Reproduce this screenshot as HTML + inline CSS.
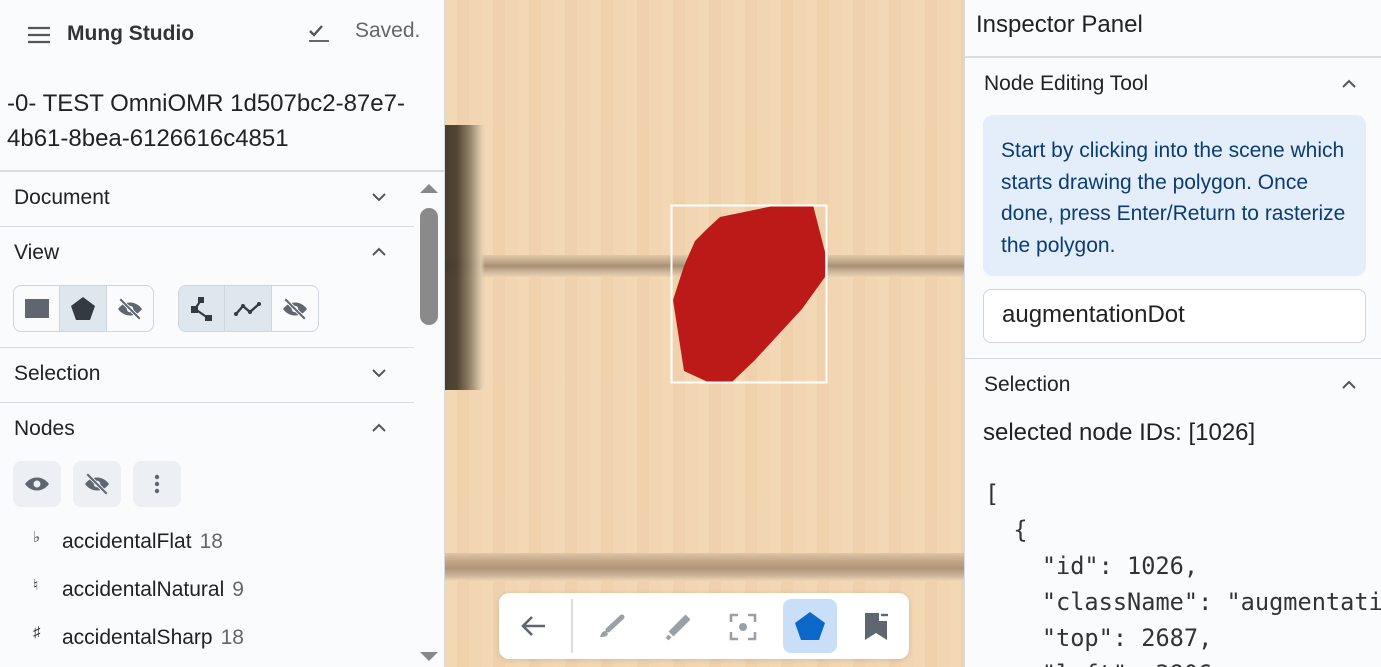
<!DOCTYPE html>
<html><head><meta charset="utf-8">
<style>
*{box-sizing:border-box;margin:0;padding:0}
html,body{width:1381px;height:667px;overflow:hidden}
body{position:relative;font-family:"Liberation Sans",sans-serif;color:#222;background:#fafbfd}
.abs{position:absolute}
#left{left:0;top:0;width:445px;height:667px;background:#fafbfd;border-right:1px solid #d8dadd;overflow:hidden}
#canvas{left:445px;top:0;width:519px;height:667px;overflow:hidden;background:#f1d4b0}
#right{left:964px;top:0;width:417px;height:667px;background:#fafbfd;border-left:1px solid #d8dadd;overflow:hidden}
.row{position:absolute;left:0;width:414px;height:55px;font-size:21px;color:#222}
.row span{position:absolute;left:14px;top:15px}
.row svg{position:absolute;left:370px;top:20px}
.hr{position:absolute;left:0;height:1px;background:#d8dadd}
.grp{position:absolute;top:285px;height:47px;border:1px solid #cfd5dc;border-radius:8px;display:flex;overflow:hidden}
.grp div{width:47px;height:45px;display:flex;align-items:center;justify-content:center;border-right:1px solid #cfd5dc}
.grp div:last-child{border-right:none}
.sel{background:#dfe7ee}
.nb{position:absolute;top:461px;width:48px;height:46px;background:#eceff3;border-radius:8px;display:flex;align-items:center;justify-content:center}
.item{position:absolute;left:62px;font-size:21px;color:#222}
.item b{font-weight:normal;color:#666;margin-left:8px}
.acc{position:absolute;left:33px;font-size:15px;color:#333}
.mono{font-family:"DejaVu Sans Mono","Liberation Mono",monospace;font-size:23.6px;color:#333;white-space:pre;line-height:36px}
</style></head><body>

<div id="left" class="abs">
  <svg class="abs" style="left:27px;top:26px" width="24" height="18" viewBox="0 0 24 18"><path d="M1 2h22M1 9h22M1 16h22" stroke="#555" stroke-width="2.2"/></svg>
  <div class="abs" style="left:67px;top:22px;font-size:21px;font-weight:bold;color:#333">Mung Studio</div>
  <svg class="abs" style="left:307px;top:20px" width="24" height="24" viewBox="0 0 24 24"><path d="M3 11l4 4 8-9" stroke="#555" stroke-width="2.4" fill="none"/><path d="M2 21h20" stroke="#666" stroke-width="2"/></svg>
  <div class="abs" style="left:355px;top:19px;font-size:21px;color:#666">Saved.</div>
  <div class="abs" style="left:7px;top:86px;font-size:24px;line-height:35px;color:#222;width:435px">-0- TEST OmniOMR 1d507bc2-87e7-<br>4b61-8bea-6126616c4851</div>
  <div class="hr" style="top:170px;width:444px;height:2px;background:#dcdcdc"></div>

  <div class="row" style="top:171px"><span>Document</span><svg width="18" height="12" viewBox="0 0 18 12"><path d="M3 3l6 6 6-6" stroke="#555" stroke-width="2" fill="none"/></svg></div>
  <div class="hr" style="top:226px;width:414px"></div>
  <div class="row" style="top:226px"><span>View</span><svg width="18" height="12" viewBox="0 0 18 12"><path d="M3 9l6-6 6 6" stroke="#555" stroke-width="2" fill="none"/></svg></div>
  <div class="grp" style="left:13px;width:141px">
    <div><svg width="26" height="22"><rect x="1" y="1" width="24" height="19" fill="#5f6670"/></svg></div>
    <div class="sel"><svg width="26" height="26" viewBox="0 0 26 26"><path d="M13 1L25 10 20 24H6L1 10Z" fill="#333a42"/></svg></div>
    <div><svg width="30" height="26" viewBox="0 0 24 24"><path d="M12 6C7 6 3 9 1 12c2 3 6 6 11 6s9-3 11-6c-2-3-6-6-11-6z" fill="#5f6670"/><circle cx="12" cy="12" r="3" fill="#fafbfd"/><path d="M3 3l18 18" stroke="#fafbfd" stroke-width="3.5"/><path d="M3 3l18 18" stroke="#5f6670" stroke-width="1.8"/></svg></div>
  </div>
  <div class="grp" style="left:178px;width:141px">
    <div class="sel"><svg width="24" height="26" viewBox="0 0 24 26"><rect x="1" y="10" width="7" height="7" fill="#333a42"/><rect x="8" y="1" width="6" height="6" fill="#333a42"/><rect x="15" y="19" width="7" height="6" fill="#333a42"/><path d="M5 13L11 4M5 13L18 22" stroke="#333a42" stroke-width="2.2"/></svg></div>
    <div class="sel"><svg width="28" height="18" viewBox="0 0 28 18"><path d="M2 14L9 6l7 6 9-8" stroke="#333a42" stroke-width="2.4" fill="none"/><circle cx="2" cy="14" r="2" fill="#333a42"/><circle cx="9" cy="6" r="2" fill="#333a42"/><circle cx="16" cy="12" r="2" fill="#333a42"/><circle cx="25" cy="4" r="2" fill="#333a42"/></svg></div>
    <div><svg width="30" height="26" viewBox="0 0 24 24"><path d="M12 6C7 6 3 9 1 12c2 3 6 6 11 6s9-3 11-6c-2-3-6-6-11-6z" fill="#5f6670"/><circle cx="12" cy="12" r="3" fill="#fafbfd"/><path d="M3 3l18 18" stroke="#fafbfd" stroke-width="3.5"/><path d="M3 3l18 18" stroke="#5f6670" stroke-width="1.8"/></svg></div>
  </div>
  <div class="hr" style="top:347px;width:414px"></div>
  <div class="row" style="top:347px"><span>Selection</span><svg width="18" height="12" viewBox="0 0 18 12"><path d="M3 3l6 6 6-6" stroke="#555" stroke-width="2" fill="none"/></svg></div>
  <div class="hr" style="top:402px;width:414px"></div>
  <div class="row" style="top:402px"><span>Nodes</span><svg width="18" height="12" viewBox="0 0 18 12"><path d="M3 9l6-6 6 6" stroke="#555" stroke-width="2" fill="none"/></svg></div>
  <div class="nb" style="left:13px"><svg width="30" height="26" viewBox="0 0 24 24"><path d="M12 6C7 6 3 9 1 12c2 3 6 6 11 6s9-3 11-6c-2-3-6-6-11-6z" fill="#5f6670"/><circle cx="12" cy="12" r="3.2" fill="#eceff3"/></svg></div>
  <div class="nb" style="left:73px"><svg width="30" height="26" viewBox="0 0 24 24"><path d="M12 6C7 6 3 9 1 12c2 3 6 6 11 6s9-3 11-6c-2-3-6-6-11-6z" fill="#5f6670"/><circle cx="12" cy="12" r="3" fill="#eceff3"/><path d="M3 3l18 18" stroke="#eceff3" stroke-width="3.5"/><path d="M3 3l18 18" stroke="#5f6670" stroke-width="1.8"/></svg></div>
  <div class="nb" style="left:133px"><svg width="6" height="20"><circle cx="3" cy="3" r="2.2" fill="#5f6670"/><circle cx="3" cy="10" r="2.2" fill="#5f6670"/><circle cx="3" cy="17" r="2.2" fill="#5f6670"/></svg></div>
  <div class="acc" style="top:528px">♭</div><div class="item" style="top:530px">accidentalFlat<b>18</b></div>
  <div class="acc" style="top:576px">♮</div><div class="item" style="top:578px">accidentalNatural<b>9</b></div>
  <div class="acc" style="top:624px">♯</div><div class="item" style="top:626px">accidentalSharp<b>18</b></div>
  <svg class="abs" style="left:419px;top:182px" width="20" height="12"><path d="M1 11L10 2l9 9Z" fill="#888"/></svg>
  <div class="abs" style="left:420px;top:208px;width:18px;height:117px;background:#8a8a8a;border-radius:9px"></div>
  <svg class="abs" style="left:419px;top:651px" width="20" height="12"><path d="M1 1h18L10 10Z" fill="#888"/></svg>
</div>

<div id="canvas" class="abs">
  <div class="abs" style="left:0;top:0;width:519px;height:667px;background:repeating-linear-gradient(90deg,rgba(255,240,210,.12) 0 12px,rgba(200,160,110,.05) 12px 24px,rgba(255,230,200,.08) 24px 36px)"></div>
  <div class="abs" style="left:0;top:255px;width:519px;height:22px;background:linear-gradient(180deg,#e2c8a8 0,#c0a88c 30%,#a89074 50%,#ccb498 75%,#ead2b4 100%)"></div>
  <div class="abs" style="left:0;top:553px;width:519px;height:28px;background:linear-gradient(180deg,#e0c6a6 0,#c0a486 30%,#ae9478 55%,#ccb296 80%,#efd5b6 100%)"></div>
  <div class="abs" style="left:0;top:125px;width:40px;height:265px;background:linear-gradient(90deg,#3f3528 0,#4a3e2e 12px,#8a7a62 24px,#dccaae 36px,rgba(240,212,176,0) 40px);border-radius:0 0 6px 0;opacity:.95"></div>
  <svg class="abs" style="left:0;top:0" width="519" height="667">
    <path d="M368 205L380 252 380 277 357 309 333 335 310 360 287 382 263 382 239 371 228 300 239 266 250 241 263 228 275 217 333 205Z" fill="#bb1a18"/>
    <rect x="226.5" y="205.5" width="155" height="177" fill="none" stroke="#fff" stroke-width="2"/>
  </svg>
  <div class="abs" style="left:54px;top:593px;width:410px;height:66px;background:#fff;border-radius:10px;box-shadow:0 1px 6px rgba(0,0,0,.12)">
    <svg class="abs" style="left:20px;top:21px" width="28" height="24" viewBox="0 0 28 24"><path d="M26 12H4M13 3l-9 9 9 9" stroke="#5f6670" stroke-width="2.6" fill="none"/></svg>
    <div class="abs" style="left:72px;top:6px;width:2px;height:54px;background:#ddd"></div>
    <svg class="abs" style="left:97px;top:19px" width="30" height="30" viewBox="0 0 30 30"><path d="M12 18L26 5" stroke="#9aa0a6" stroke-width="5" stroke-linecap="round"/><path d="M10 19c-4 0-5 3-6 6 3 0 7 0 8-3z" fill="#9aa0a6"/></svg>
    <svg class="abs" style="left:164px;top:19px" width="30" height="30" viewBox="0 0 30 30"><path d="M8 22L25 5" stroke="#9aa0a6" stroke-width="7"/><path d="M4 27l3-3" stroke="#9aa0a6" stroke-width="4"/></svg>
    <svg class="abs" style="left:230px;top:20px" width="28" height="28" viewBox="0 0 28 28"><path d="M2 9V2h7M19 2h7v7M26 19v7h-7M9 26H2v-7" stroke="#9aa0a6" stroke-width="2.6" fill="none"/><circle cx="14" cy="14" r="4" fill="#9aa0a6"/></svg>
    <div class="abs" style="left:284px;top:6px;width:54px;height:54px;background:#c9dff7;border-radius:8px"></div>
    <svg class="abs" style="left:295px;top:18px" width="32" height="30" viewBox="0 0 32 30"><path d="M16 1L31 12 25 29H7L1 12Z" fill="#0b68c8"/></svg>
    <svg class="abs" style="left:364px;top:18px" width="26" height="30" viewBox="0 0 26 30"><path d="M2 2h14v8h8v19l-11-7-11 7Z" fill="#5f6670"/><path d="M18 4h7" stroke="#5f6670" stroke-width="2.4"/></svg>
  </div>
</div>

<div id="right" class="abs">
  <div class="abs" style="left:11px;top:11px;font-size:24px;color:#222">Inspector Panel</div>
  <div class="hr" style="top:56px;width:417px;height:2px;background:#dcdcdc"></div>
  <div class="abs" style="left:19px;top:72px;font-size:21px;color:#222">Node Editing Tool</div>
  <svg class="abs" style="left:375px;top:78px" width="18" height="12" viewBox="0 0 18 12"><path d="M3 9l6-6 6 6" stroke="#555" stroke-width="2" fill="none"/></svg>
  <div class="abs" style="left:18px;top:115px;width:383px;height:161px;background:#e3eefa;border-radius:10px;padding:20px 10px 0 18px;font-size:21px;line-height:31.5px;color:#0d3c73">Start by clicking into the scene which starts drawing the polygon. Once done, press Enter/Return to rasterize the polygon.</div>
  <div class="abs" style="left:18px;top:289px;width:383px;height:54px;border:1px solid #cfd3d8;border-radius:8px;background:#fff;padding:11px 0 0 18px;font-size:24px;color:#222">augmentationDot</div>
  <div class="hr" style="top:358px;width:417px"></div>
  <div class="abs" style="left:19px;top:373px;font-size:21px;color:#222">Selection</div>
  <svg class="abs" style="left:375px;top:379px" width="18" height="12" viewBox="0 0 18 12"><path d="M3 9l6-6 6 6" stroke="#555" stroke-width="2" fill="none"/></svg>
  <div class="abs" style="left:18px;top:419px;font-size:24px;color:#222">selected node IDs: [1026]</div>
  <div class="abs mono" style="left:20px;top:476px">[
  {
    "id": 1026,
    "className": "augmentationDot",
    "top": 2687,
    "left": 3806,</div>
</div>
</body></html>
